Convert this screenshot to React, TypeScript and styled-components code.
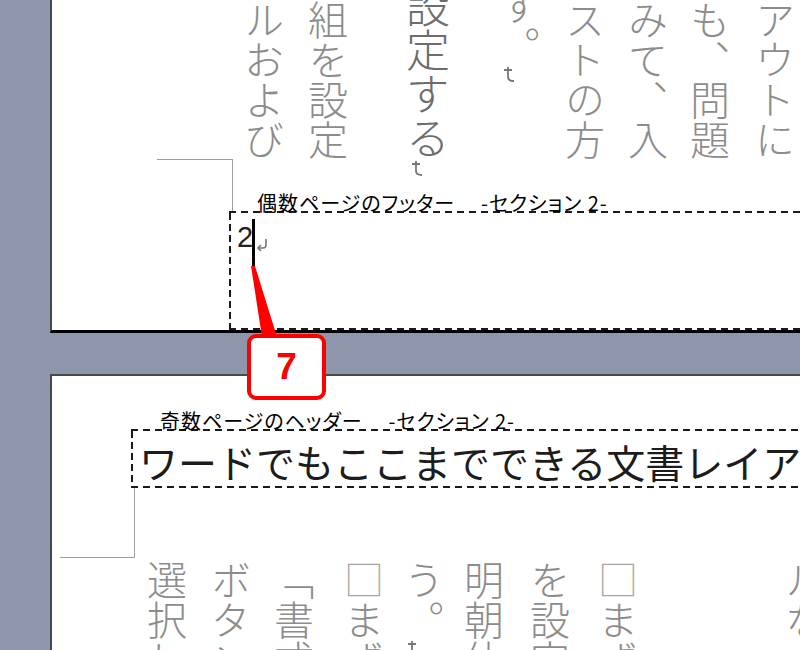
import React from "react";
import styled, { createGlobalStyle } from "styled-components";

const GlobalStyle = createGlobalStyle`
  html, body {
    margin: 0;
    padding: 0;
    background: #8d96ab;
    overflow: hidden;
  }
`;

const jp = `"Noto Sans CJK JP", "Noto Sans", sans-serif`;

const dashX = (color: string) =>
  `repeating-linear-gradient(to right, ${color} 0 7px, transparent 7px 12px)`;
const dashY = (color: string) =>
  `repeating-linear-gradient(to bottom, ${color} 0 7px, transparent 7px 11px)`;

type Area = { $col: string; $row: string };

const Screen = styled.div`
  position: relative;
  width: 800px;
  height: 650px;
  overflow: hidden;
  display: flex;
  flex-direction: column;
  background: #8d96ab;
  font-family: ${jp};
`;

const Sheet = styled.div`
  flex: none;
  width: 800px;
  margin-left: 50px;
  border-left: 2px solid #474747;
  background: #fff;
  display: grid;
  overflow: hidden;
`;

const EvenSheet = styled(Sheet)`
  height: 330px;
  border-bottom: 3px solid #000;
  grid-template-columns: 105px 72px 4px 1fr;
  grid-template-rows: 159px 33px 21px 1fr;
`;

const OddSheet = styled(Sheet)`
  flex: 1;
  margin-top: 41px;
  border-top: 2px solid #4a4a4a;
  grid-template-columns: 8px 71px 4px 1fr;
  grid-template-rows: 33px 22px 57px 70px 1fr;
`;

const Columns = styled.div<Area & { $pad?: number }>`
  grid-column: ${(p) => p.$col};
  grid-row: ${(p) => p.$row};
  display: flex;
  flex-direction: row-reverse;
  align-items: flex-start;
  padding-top: ${(p) => p.$pad ?? 0}px;
  min-width: 0;
`;

const Line = styled.div<{ $gap: number; $size?: number; $shift?: number; $tone?: string }>`
  flex: none;
  writing-mode: vertical-rl;
  width: ${(p) => p.$size ?? 40}px;
  margin-right: ${(p) => p.$gap}px;
  margin-top: ${(p) => p.$shift ?? 0}px;
  font-size: ${(p) => p.$size ?? 40}px;
  line-height: ${(p) => p.$size ?? 40}px;
  font-weight: 300;
  color: ${(p) => p.$tone ?? "#8c8c8c"};
  white-space: nowrap;
`;

const Hollow = styled.span`
  color: #a7a79f;
`;

const VMark = styled.svg`
  vertical-align: -11px;
`;

const Caption = styled.div<Area & { $indent: number }>`
  grid-column: ${(p) => p.$col};
  grid-row: ${(p) => p.$row};
  display: flex;
  align-items: flex-end;
  gap: 26px;
  padding-left: ${(p) => p.$indent}px;
  font-size: 20px;
  line-height: 20px;
  letter-spacing: 1px;
  font-feature-settings: "palt";
  color: #000;
  white-space: nowrap;
  background: ${dashX("#1a1a1a")} left bottom / 100% 2px no-repeat;
`;

const Frame = styled.div<Area>`
  grid-column: ${(p) => p.$col};
  grid-row: ${(p) => p.$row};
  min-width: 0;
  background:
    ${dashY("#1a1a1a")} left top / 2px 100% no-repeat,
    ${dashX("#1a1a1a")} left bottom / 100% 2px no-repeat;
`;

const CornerMark = styled.div<Area & { $edge: "top" | "bottom" }>`
  grid-column: ${(p) => p.$col};
  grid-row: ${(p) => p.$row};
  border-right: 1px solid #9e9e9e;
  border-${(p) => p.$edge}: 1px solid #9e9e9e;
`;

const FooterLine = styled.div`
  display: flex;
  align-items: flex-start;
  padding: 6px 0 0 8px;
`;

const PageNo = styled.span`
  margin-top: 4px;
  font-family: "Liberation Sans", Arial, sans-serif;
  font-size: 29px;
  line-height: 29px;
  color: #222;
`;

const Caret = styled.span`
  width: 3px;
  height: 48px;
  margin-left: -1px;
  background: #000;
`;

const ReturnMark = styled.svg`
  margin-top: 19px;
  flex: none;
`;

const HeadingRun = styled.div`
  padding: 3px 0 0 8px;
  font-size: 39px;
  line-height: 55px;
  color: #1c1c1c;
  white-space: nowrap;
`;

const Leader = styled.svg`
  position: absolute;
  left: 0;
  top: 0;
  pointer-events: none;
`;

const Badge = styled.div`
  position: absolute;
  left: 247px;
  top: 334px;
  width: 79px;
  height: 66px;
  box-sizing: border-box;
  border: 4px solid #ff0000;
  border-radius: 9px;
  background: #fff;
  display: flex;
  align-items: center;
  justify-content: center;
  font-family: "Liberation Sans", Arial, sans-serif;
  font-weight: 700;
  font-size: 37px;
  color: #ff0000;
`;

const ParaMark = () => (
  <VMark width="14" height="18" viewBox="0 0 14 18">
    <path d="M2 4 H10 M6 1 V11 Q6 15 12 15" fill="none" stroke="#777" strokeWidth="1.8" />
  </VMark>
);

type Col = {
  text: string;
  gap: number;
  size?: number;
  shift?: number;
  tone?: string;
  mark?: boolean;
};

const evenLines: Col[] = [
  { text: "アウトに", gap: 57 },
  { text: "も、問題", gap: 25 },
  { text: "みて、入", gap: 22 },
  { text: "ストの方", gap: 23 },
  { text: "す。", gap: 25, shift: -14, mark: true },
  { text: "設定する", gap: 50, shift: -16, size: 44, tone: "#6d6d6d", mark: true },
  { text: "組を設定", gap: 58 },
  { text: "ルおよび", gap: 24 },
];

const oddLines: Col[] = [
  { text: "ルな", gap: 27 },
  { text: "□まず", gap: 147 },
  { text: "を設定", gap: 28 },
  { text: "明朝体", gap: 26 },
  { text: "う。", gap: 20, mark: true },
  { text: "□まず", gap: 20 },
  { text: "「書式", gap: 30 },
  { text: "ボタン", gap: 23 },
  { text: "選択し", gap: 24 },
];

function renderLine(c: Col, i: number) {
  const boxed = c.text.startsWith("□");
  return (
    <Line key={i} $gap={c.gap} $size={c.size} $shift={c.shift} $tone={c.tone}>
      {boxed ? (
        <>
          <Hollow>□</Hollow>
          {c.text.slice(1)}
        </>
      ) : (
        c.text
      )}
      {c.mark && <ParaMark />}
    </Line>
  );
}

export default function App() {
  return (
    <>
      <GlobalStyle />
      <Screen>
        <EvenSheet>
          <Columns $col="4" $row="1 / 3">
            {evenLines.map(renderLine)}
          </Columns>
          <CornerMark $col="2 / 4" $row="2 / 4" $edge="top" />
          <Caption $col="3 / 5" $row="3" $indent={28}>
            <span>偶数ページのフッター</span>
            <span>-セクション 2-</span>
          </Caption>
          <Frame $col="3 / 5" $row="4">
            <FooterLine>
              <PageNo>2</PageNo>
              <Caret />
              <ReturnMark width="14" height="14" viewBox="0 0 14 14">
                <path
                  d="M11 1 V7 Q11 10 8 10 H3 M6 7 L3 10 L6 13"
                  fill="none"
                  stroke="#777"
                  strokeWidth="1.6"
                />
              </ReturnMark>
            </FooterLine>
          </Frame>
        </EvenSheet>

        <OddSheet>
          <Caption $col="3 / 5" $row="2" $indent={29}>
            <span>奇数ページのヘッダー</span>
            <span>-セクション 2-</span>
          </Caption>
          <Frame $col="3 / 5" $row="3">
            <HeadingRun>ワードでもここまでできる文書レイアウト</HeadingRun>
          </Frame>
          <CornerMark $col="2 / 4" $row="4" $edge="bottom" />
          <Columns $col="3 / 5" $row="5" $pad={2}>
            {oddLines.map(renderLine)}
          </Columns>
        </OddSheet>

        <Leader width="800" height="650" viewBox="0 0 800 650">
          <polygon points="251,266 255,266 277,337 262,337" fill="#ff0000" />
        </Leader>
        <Badge>7</Badge>
      </Screen>
    </>
  );
}
